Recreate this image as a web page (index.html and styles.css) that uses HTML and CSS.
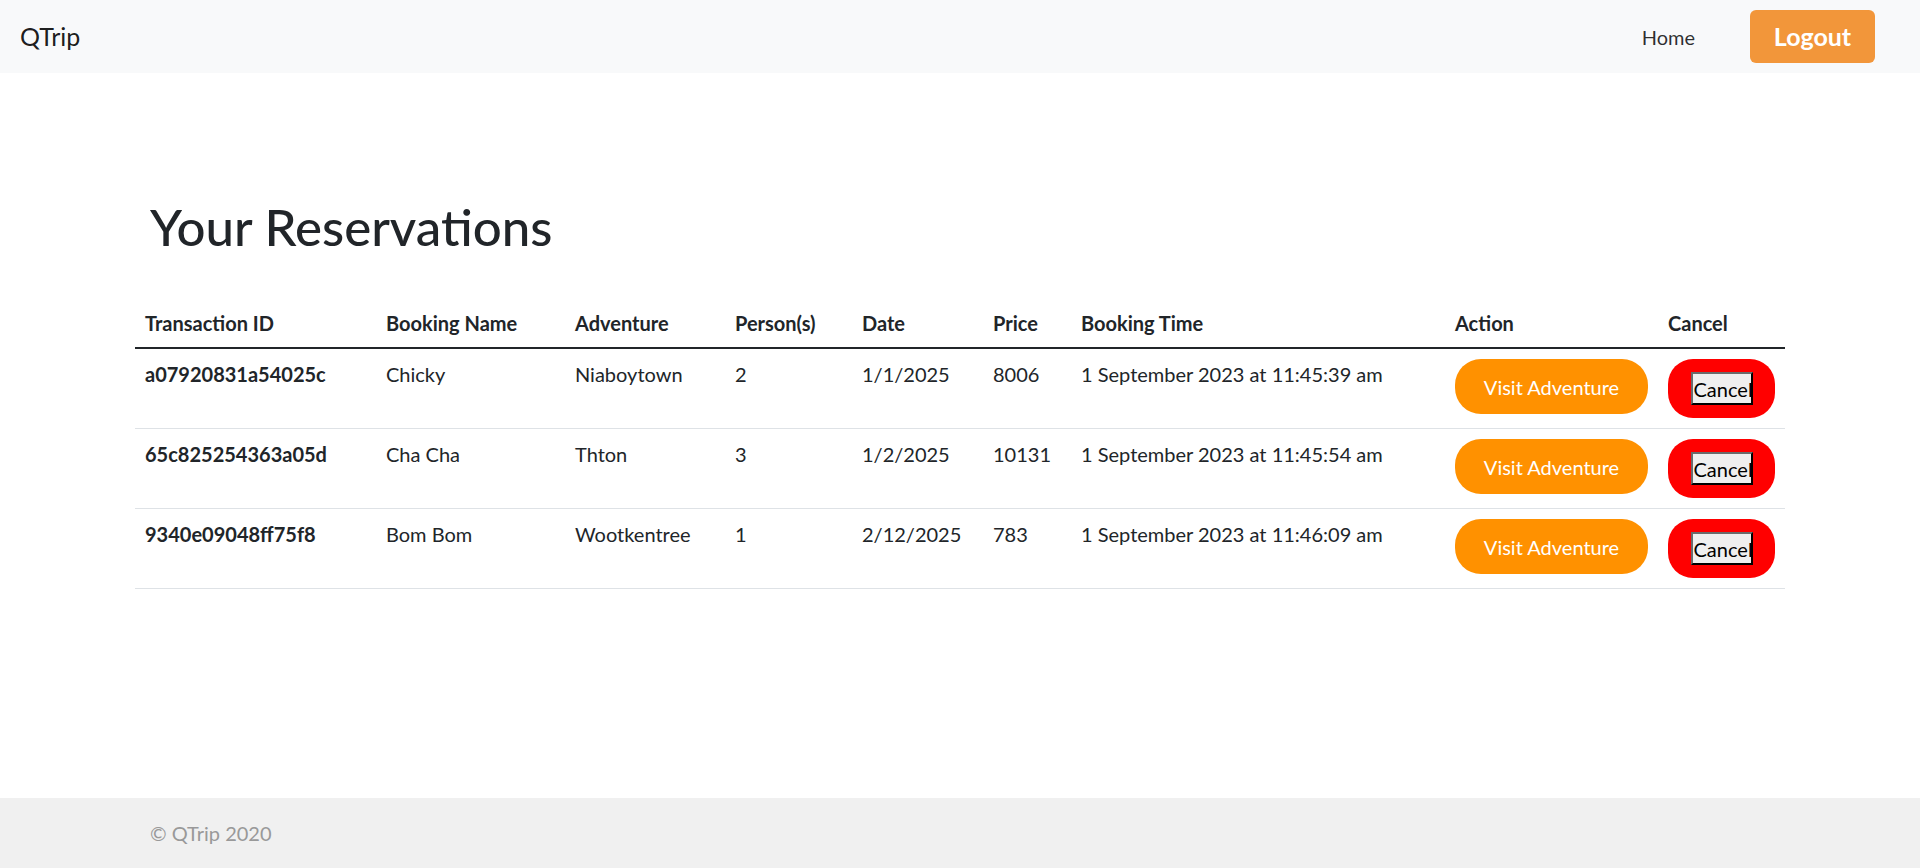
FILE: index.html
```html
<!DOCTYPE html>
<html lang="en">
<head>
<meta charset="utf-8">
<title>QTrip - Reservations</title>
<link rel="stylesheet" href="styles.css">
</head>
<body>
<nav class="navbar">
  <a class="brand" href="#">QTrip</a>
  <div class="nav-right">
    <a class="nav-link" href="#">Home</a>
    <button class="logout">Logout</button>
  </div>
</nav>
<main class="main">
  <div class="container">
    <h1 class="title">Your Reservations</h1>
  </div>
  <table class="res-table">
    <colgroup>
      <col class="w-id"><col class="w-name"><col class="w-adv"><col class="w-per"><col class="w-date"><col class="w-price"><col class="w-time"><col class="w-action"><col class="w-cancel">
    </colgroup>
    <thead>
      <tr>
        <th>Transaction ID</th><th>Booking Name</th><th>Adventure</th><th>Person(s)</th><th>Date</th><th>Price</th><th>Booking Time</th><th>Action</th><th>Cancel</th>
      </tr>
    </thead>
    <tbody>
      <tr>
        <td class="tid">a07920831a54025c</td><td>Chicky</td><td>Niaboytown</td><td>2</td><td>1/1/2025</td><td>8006</td><td>1 September 2023 at 11:45:39 am</td>
        <td><a class="visit" href="#">Visit Adventure</a></td>
        <td><span class="cancel-wrap"><button class="cancel-btn">Cancel</button></span></td>
      </tr>
      <tr>
        <td class="tid">65c825254363a05d</td><td>Cha Cha</td><td>Thton</td><td>3</td><td>1/2/2025</td><td>10131</td><td>1 September 2023 at 11:45:54 am</td>
        <td><a class="visit" href="#">Visit Adventure</a></td>
        <td><span class="cancel-wrap"><button class="cancel-btn">Cancel</button></span></td>
      </tr>
      <tr>
        <td class="tid">9340e09048ff75f8</td><td>Bom Bom</td><td>Wootkentree</td><td>1</td><td>2/12/2025</td><td>783</td><td>1 September 2023 at 11:46:09 am</td>
        <td><a class="visit" href="#">Visit Adventure</a></td>
        <td><span class="cancel-wrap"><button class="cancel-btn">Cancel</button></span></td>
      </tr>
    </tbody>
  </table>
</main>
<footer class="footer">
  <div class="footer-inner">© QTrip 2020</div>
</footer>
</body>
</html>
```
FILE: styles.css
```css
* { box-sizing: border-box; }
html, body { margin: 0; padding: 0; }
body {
  font-family: "Segoe UI", Lato, "Open Sans", sans-serif;
  font-size: 20px;
  line-height: 1.5;
  color: #212529;
  background: #fff;
  min-height: 100vh;
  display: flex;
  flex-direction: column;
}
a { text-decoration: none; }

.navbar {
  background: #f8f9fa;
  height: 73px;
  display: flex;
  align-items: center;
  justify-content: space-between;
  padding: 0 45px 0 20px;
}
.brand {
  font-size: 25px;
  color: rgba(0, 0, 0, 0.9);
  line-height: 1.5;
}
.nav-right {
  display: flex;
  align-items: center;
  gap: 55px;
}
.nav-link {
  color: rgba(0, 0, 0, 0.82);
  font-size: 20px;
}
.logout {
  width: 125px;
  height: 53px;
  background: #f2963a;
  border: none;
  border-radius: 6px;
  color: #fff;
  font-family: inherit;
  font-size: 25px;
  font-weight: 700;
  padding: 0 0 2px;
}

.main {
  flex: 1;
  width: 1650px;
  margin: 0 auto;
  padding-top: 124px;
}
.container { padding: 0 15px; }
.title {
  margin: 0 0 40px;
  font-size: 51px;
  font-weight: 500;
  line-height: 60px;
}

.res-table {
  width: 1650px;
  border-collapse: collapse;
  table-layout: fixed;
}
.w-id { width: 241px; }
.w-name { width: 189px; }
.w-adv { width: 160px; }
.w-per { width: 127px; }
.w-date { width: 131px; }
.w-price { width: 88px; }
.w-time { width: 374px; }
.w-action { width: 213px; }
.w-cancel { width: 127px; }

.res-table th {
  text-align: left;
  font-weight: 700;
  padding: 11px 10px 9px;
  border-bottom: 2px solid #212529;
  vertical-align: top;
  white-space: nowrap;
}
.res-table td {
  padding: 10px;
  border-bottom: 1px solid #dee2e6;
  vertical-align: top;
  white-space: nowrap;
}
.res-table .tid { font-weight: 700; }

.visit {
  display: inline-flex;
  align-items: center;
  justify-content: center;
  width: 193px;
  height: 55px;
  background: #ff9100;
  color: #fff;
  border-radius: 26px;
  font-size: 20px;
}
.cancel-wrap {
  display: inline-flex;
  align-items: center;
  justify-content: center;
  width: 107px;
  height: 59px;
  background: #ff0000;
  border-radius: 25px;
}
.cancel-btn {
  width: 62px;
  height: 33px;
  padding: 0 1px;
  background: #efefef;
  border: 2px solid;
  border-color: #6b6b6b #000 #000 #6b6b6b;
  font-family: inherit;
  font-size: 20px;
  color: #000;
  line-height: 1;
  overflow: hidden;
  white-space: nowrap;
}

.footer {
  background: #f0f0f0;
  height: 70px;
}
.footer-inner {
  width: 1650px;
  margin: 0 auto;
  padding: 20px 15px;
  color: #999;
}
```
